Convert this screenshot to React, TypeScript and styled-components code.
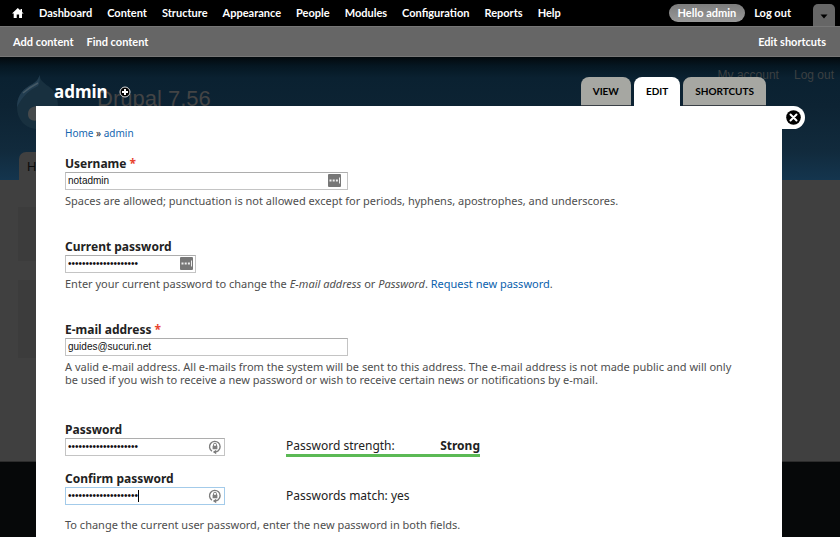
import React from 'react';
import styled, { createGlobalStyle } from 'styled-components';

const GlobalStyle = createGlobalStyle`
  *, *::before, *::after { box-sizing: border-box; }
  html, body { margin: 0; padding: 0; background: #060809; }
  body { font-family: "Noto Sans", "Open Sans", sans-serif; font-size: 11px; color: #222; }
  h1, p, ul { margin: 0; padding: 0; }
  ul { list-style: none; }
  a { text-decoration: none; }
`;

const Screen = styled.div`
  position: relative;
  display: flex;
  flex-direction: column;
  min-height: 100vh;
  overflow: hidden;
`;

/* Dimmed site behind the overlay */
const Backdrop = styled.div`
  position: absolute;
  inset: 0;
  display: flex;
  flex-direction: column;
  background: #060809;
  font-family: "Liberation Sans", Arial, sans-serif;
`;

const SiteHeader = styled.header`
  display: flex;
  flex-direction: column;
  height: 180px;
  padding: 67px 6px 0 17px;
  background: linear-gradient(#03090d 57px, #051722 66px, #0a2131 78px, #0d2333 106px, #112a3c 150px, #14354e 180px);
`;

const SiteLinks = styled.nav`
  display: flex;
  justify-content: flex-end;
  gap: 15px;
  height: 8px;
  font-size: 12px;
  line-height: 16px;
  a { color: #3c4042; }
`;

const SiteBrand = styled.div`
  display: flex;
  flex: 1;
  gap: 39px;
  color: #434445;
  font-size: 22px;
  line-height: 48px;
`;

const SiteTab = styled.a`
  width: 70px;
  height: 28px;
  margin-left: 2px;
  padding-left: 8px;
  border-radius: 7px 7px 0 0;
  background: #404040;
  color: #0c0c0c;
  font-size: 13px;
  line-height: 30px;
`;

const SiteBody = styled.div`
  display: flex;
  flex-direction: column;
  gap: 19px;
  height: 282px;
  padding: 27px 18px;
  background: #404040;
  border-bottom: 1px solid #2c2c2c;
`;

const SiteBlock = styled.div<{ $tall?: boolean }>`
  width: 140px;
  height: ${p => (p.$tall ? 78 : 54)}px;
  background: #3c3c3c;
`;

/* Admin toolbar */
const Toolbar = styled.header`
  position: relative;
  color: #fff;
  font: 700 11px/16px Lato, "Open Sans", sans-serif;
  a { color: #fff; }
`;

const MenuBar = styled.nav`
  display: flex;
  align-items: center;
  height: 26px;
  padding: 0 5px 0 12px;
  background: #000;
`;

const MenuList = styled.ul`
  display: flex;
  flex: 1;
  align-items: center;
  gap: 15px;
  white-space: nowrap;
  svg { display: block; }
`;

const UserList = styled(MenuList)`
  flex: none;
  gap: 9px;
`;

const UserPill = styled.a`
  display: block;
  height: 18px;
  padding: 0 9px;
  border-radius: 9px;
  background: linear-gradient(#7c7c7c, #999);
  line-height: 18px;
`;

const Toggle = styled.button`
  display: flex;
  align-self: flex-end;
  align-items: center;
  justify-content: center;
  width: 22px;
  height: 22px;
  margin-left: 22px;
  padding: 2px 0 0;
  border: 0;
  border-radius: 5px 5px 0 0;
  background: #666;
`;

const ShortcutBar = styled.nav`
  display: flex;
  align-items: center;
  gap: 13px;
  height: 31px;
  padding: 0 14px 0 13px;
  border-top: 1px solid #777;
  border-bottom: 1px solid #777;
  background: #666;
`;

const EditShortcuts = styled.a`
  margin-left: auto;
`;

/* Overlay */
const Overlay = styled.main`
  position: relative;
  display: flex;
  flex: 1;
  flex-direction: column;
  margin: 0 58px 0 36px;
`;

const OverlayHeader = styled.div`
  display: flex;
  align-items: flex-end;
  height: 49px;
  padding: 0 16px 0 18px;
`;

const Title = styled.h1`
  color: #fff;
  font-size: 17px;
  line-height: 28px;
  height: 28px;
`;

const AddShortcut = styled.button`
  display: flex;
  margin: 0 auto 8px 11px;
  padding: 0;
  border: 0;
  background: none;
`;

const Tabs = styled.nav`
  display: flex;
  gap: 3px;
`;

const Tab = styled.a<{ $active?: boolean }>`
  height: 29px;
  padding: 0 12px;
  border-bottom: 1px solid ${p => (p.$active ? '#fff' : '#3a4046')};
  border-radius: 8px 8px 0 0;
  background: ${p => (p.$active ? '#fff' : '#a6a7a2')};
  color: #000;
  font: 700 10px/28px Lato, "Open Sans", sans-serif;
`;

const Panel = styled.section`
  flex: 1;
  padding: 20px 29px 4px;
  background: #fff;
`;

const CloseButton = styled.button`
  position: absolute;
  top: 49px;
  left: 100%;
  display: flex;
  align-items: center;
  width: 23px;
  height: 23px;
  padding: 0 0 0 4px;
  border: 0;
  border-radius: 0 12px 12px 0;
  background: #fff;
`;

const Breadcrumb = styled.nav`
  margin-bottom: 15px;
  font-size: 10px;
  line-height: 14px;
  a { color: #1566b0; }
`;

const Field = styled.div<{ $gap: number }>`
  margin-bottom: ${p => p.$gap}px;
`;

const Label = styled.label`
  display: block;
  height: 17px;
  font-size: 12px;
  font-weight: 700;
  line-height: 17px;
`;

const Required = styled.span`
  color: #e8432e;
`;

const Control = styled.div<{ $width: number; $end?: number; $focused?: boolean }>`
  position: relative;
  display: flex;
  align-items: center;
  width: ${p => p.$width}px;
  max-width: 100%;
  height: 18px;
  padding: 0 ${p => p.$end ?? 2}px 0 2px;
  border: 1px solid ${p => (p.$focused ? '#a3cbea' : '#c4c4c4')};
  border-top-color: ${p => (p.$focused ? '#a3cbea' : '#adadad')};
  background: #fff;
  svg { flex: none; }
`;

const Input = styled.input`
  flex: 1;
  min-width: 0;
  height: 16px;
  padding: 0;
  border: 0;
  outline: 0;
  background: transparent;
  color: #111;
  font: 10px/16px "Liberation Sans", Arial, sans-serif;
`;

const Caret = styled.span`
  position: absolute;
  top: 2px;
  left: 72px;
  width: 1px;
  height: 12px;
  background: #000;
`;

const Help = styled.p<{ $top?: number }>`
  max-width: 680px;
  margin-top: ${p => p.$top ?? 4}px;
  color: #4e4e4e;
  line-height: 13px;
  a { color: #0a61ad; }
`;

const PasswordRow = styled.div<{ $gap: number }>`
  display: flex;
  align-items: flex-end;
  gap: 61px;
  margin-bottom: ${p => p.$gap}px;
`;

const Strength = styled.div`
  display: flex;
  justify-content: space-between;
  width: 194px;
  margin-bottom: -1px;
  border-bottom: 3px solid #5bb955;
  font-size: 12px;
  line-height: 17px;
`;

const Match = styled.div`
  font-size: 12px;
  line-height: 18px;
`;

const HomeIcon = () => (
  <svg width="12" height="10" viewBox="0 0 12 10" aria-hidden="true">
    <path d="M5.8 0 8.500 2.500V1H10v3L11.700 5.600H10V10H7.100V6.600H4.700V10H1.700V5.600H0Z" fill="#fff" />
  </svg>
);

const ManagerIcon = () => (
  <svg width="13" height="14" viewBox="0 0 13 14" aria-hidden="true">
    <rect width="13" height="13" rx="1" fill="#777" />
    <path d="M1.500 5.500h2v2h-2zM4.700 5.500h2v2h-2zM7.900 5.500h2v2h-2zM11 3.500h1v6h-1z" fill="#eee" />
  </svg>
);

const LockIcon = () => (
  <svg width="14" height="16" viewBox="0 0 14 16" aria-hidden="true">
    <g fill="none" stroke="#7d7d7d">
      <path d="M4 12.200A5.300 5.300 0 1 1 10.300 11.700Q9 13 6.500 12.900" strokeWidth="1.400" />
      <path d="M5.500 7V5.700a1.500 1.500 0 0 1 3 0V7" />
    </g>
    <path d="M4.600 6.800h4.800v3.400H4.600zM8.200 10.700v4.600L4.800 13z" fill="#7d7d7d" />
  </svg>
);

const Drop = () => (
  <svg width="41" height="54" viewBox="0 0 41 54" aria-hidden="true">
    <path d="M22.500 0C23 6 28 8.500 33 12.500C38 16 41 23 41 31C41 44 32 54 20.500 54C9 54 0 45 0 32C0 22 5 15 12 11C18 8 21.500 5 22.500 0Z" fill="#18303f" />
    <path d="M22.500 0C21.500 5 18 8 12 11C5 15 0 22 0 32C5 22 12 15 21 11Q23.500 7 22.500 0Z" fill="#223d50" />
    <path d="M6 18Q13 12 21 8" stroke="#465a66" strokeWidth="1.500" fill="none" />
    <path d="M31 33C25 30 11 29 11 39C11 47 20 47 25 43S35 45 36 39S33 34 31 33Z" fill="#464a4c" />
  </svg>
);

const menu = ['Dashboard', 'Content', 'Structure', 'Appearance', 'People', 'Modules', 'Configuration', 'Reports', 'Help'];

export default function App() {
  return (
    <Screen>
      <GlobalStyle />
      <Backdrop>
        <SiteHeader>
          <SiteLinks><a href="#account">My account</a><a href="#site-logout">Log out</a></SiteLinks>
          <SiteBrand><Drop />Drupal 7.56</SiteBrand>
          <SiteTab href="#home">Home</SiteTab>
        </SiteHeader>
        <SiteBody><SiteBlock /><SiteBlock $tall /></SiteBody>
      </Backdrop>

      <Toolbar>
        <MenuBar>
          <MenuList>
            <li><a href="#front" aria-label="Home"><HomeIcon /></a></li>
            {menu.map(m => <li key={m}><a href={`#${m.toLowerCase()}`}>{m}</a></li>)}
          </MenuList>
          <UserList>
            <li><UserPill href="#user">Hello admin</UserPill></li>
            <li><a href="#logout">Log out</a></li>
          </UserList>
          <Toggle type="button" aria-label="Hide shortcuts">
            <svg width="8" height="5" viewBox="0 0 8 5"><path d="M.5.500h7L4 4.500Z" fill="#000" /></svg>
          </Toggle>
        </MenuBar>
        <ShortcutBar>
          <a href="#add">Add content</a>
          <a href="#find">Find content</a>
          <EditShortcuts href="#edit-shortcuts">Edit shortcuts</EditShortcuts>
        </ShortcutBar>
      </Toolbar>

      <Overlay>
        <OverlayHeader>
          <Title>admin</Title>
          <AddShortcut type="button" aria-label="Add to shortcuts">
            <svg width="12" height="12" viewBox="0 0 12 12">
              <circle cx="6" cy="6" r="5" fill="#000" stroke="#ddd" />
              <path d="M6 3v6M3 6h6" stroke="#fff" strokeWidth="2" />
            </svg>
          </AddShortcut>
          <Tabs>
            <Tab href="#view">VIEW</Tab>
            <Tab href="#edit" $active>EDIT</Tab>
            <Tab href="#shortcuts">SHORTCUTS</Tab>
          </Tabs>
        </OverlayHeader>
        <CloseButton type="button" aria-label="Close overlay">
          <svg width="15" height="15" viewBox="0 0 15 15">
            <circle cx="7.500" cy="7.500" r="7.300" fill="#000" />
            <path d="m4.500 4.500 6 6m0-6-6 6" stroke="#fff" strokeWidth="2" strokeLinecap="round" />
          </svg>
        </CloseButton>

        <Panel>
          <Breadcrumb><a href="#home">Home</a> » <a href="#admin">admin</a></Breadcrumb>
          <Field $gap={31}>
            <Label htmlFor="name">Username <Required>*</Required></Label>
            <Control $width={283} $end={6}><Input id="name" defaultValue="notadmin" /><ManagerIcon /></Control>
            <Help>Spaces are allowed; punctuation is not allowed except for periods, hyphens, apostrophes, and underscores.</Help>
          </Field>
          <Field $gap={31}>
            <Label htmlFor="current">Current password</Label>
            <Control $width={131}><Input id="current" type="password" defaultValue="12345678901234567890" /><ManagerIcon /></Control>
            <Help>Enter your current password to change the <em>E-mail address</em> or <em>Password</em>. <a href="#reset">Request new password</a>.</Help>
          </Field>
          <Field $gap={35}>
            <Label htmlFor="mail">E-mail address <Required>*</Required></Label>
            <Control $width={283}><Input id="mail" type="email" defaultValue="guides@sucuri.net" /></Control>
            <Help>A valid e-mail address. All e-mails from the system will be sent to this address. The e-mail address is not made public and will only be used if you wish to receive a new password or wish to receive certain news or notifications by e-mail.</Help>
          </Field>
          <PasswordRow $gap={14}>
            <div>
              <Label htmlFor="pass1">Password</Label>
              <Control $width={160}><Input id="pass1" type="password" defaultValue="12345678901234567890" /><LockIcon /></Control>
            </div>
            <Strength><span>Password strength:</span><strong>Strong</strong></Strength>
          </PasswordRow>
          <PasswordRow $gap={13}>
            <div>
              <Label htmlFor="pass2">Confirm password</Label>
              <Control $width={160} $focused><Input id="pass2" type="password" defaultValue="12345678901234567890" /><Caret /><LockIcon /></Control>
            </div>
            <Match>Passwords match: yes</Match>
          </PasswordRow>
          <Help $top={0}>To change the current user password, enter the new password in both fields.</Help>
        </Panel>
      </Overlay>
    </Screen>
  );
}
